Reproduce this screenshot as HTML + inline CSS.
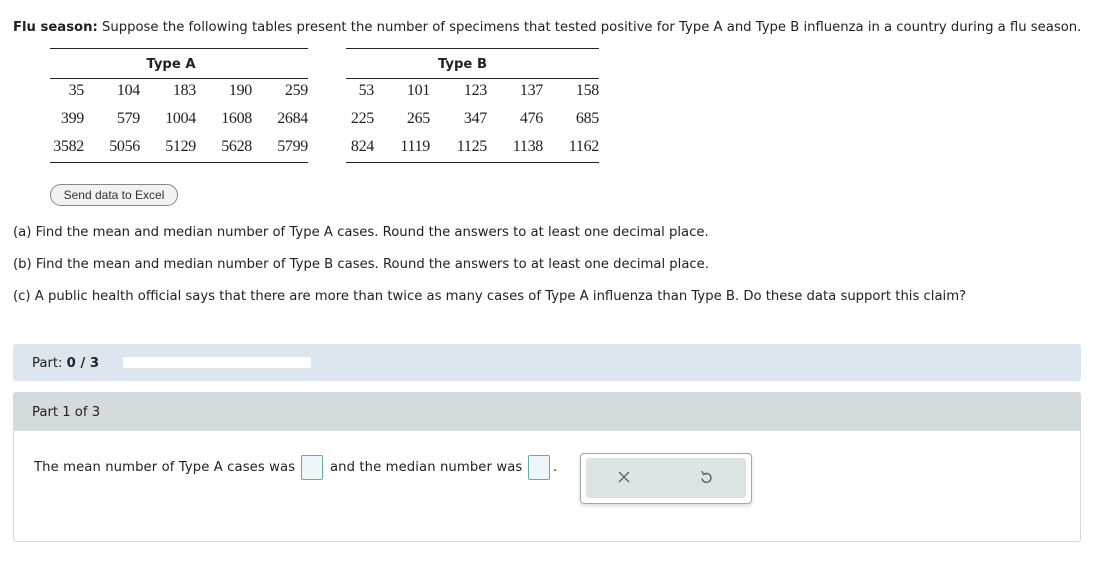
<!DOCTYPE html>
<html><head><style>
body{margin:0;width:1098px;height:583px;background:#fff;font-family:"DejaVu Sans",Verdana,sans-serif;font-size:13.2px;color:#222;position:relative;overflow:hidden}
.a{position:absolute;white-space:nowrap}
.n{position:absolute;font-family:"Liberation Serif",serif;font-size:16px;text-align:right;width:60px;letter-spacing:-0.3px}
.ln{position:absolute;height:1px;background:#222}
.h{position:absolute;font-weight:bold;font-size:13.2px;text-align:center}
</style></head><body>
<div class="a" style="left:13px;top:20px"><b>Flu season:</b> Suppose the following tables present the number of specimens that tested positive for Type A and Type B influenza in a country during a flu season.</div>
<div class="ln" style="left:50px;top:48px;width:258px"></div>
<div class="ln" style="left:50px;top:78px;width:258px"></div>
<div class="ln" style="left:50px;top:162px;width:258px"></div>
<div class="ln" style="left:346px;top:48px;width:253px"></div>
<div class="ln" style="left:346px;top:78px;width:253px"></div>
<div class="ln" style="left:346px;top:162px;width:253px"></div>
<div class="h" style="left:42px;top:57px;width:258px">Type A</div>
<div class="h" style="left:336px;top:57px;width:253px">Type B</div>
<div id="nums"></div>
<div class="a" style="left:50px;top:184px;width:126px;height:20px;border:1px solid #888;border-radius:11px;background:#f2f2f2;font-family:'Liberation Sans',Arial,sans-serif;font-size:12px;color:#333;text-align:center;line-height:20px">Send data to Excel</div>
<div class="a" style="left:13px;top:225px">(a) Find the mean and median number of Type A cases. Round the answers to at least one decimal place.</div>
<div class="a" style="left:13px;top:257px">(b) Find the mean and median number of Type B cases. Round the answers to at least one decimal place.</div>
<div class="a" style="left:13px;top:289px">(c) A public health official says that there are more than twice as many cases of Type A influenza than Type B. Do these data support this claim?</div>
<div class="a" style="left:13px;top:344px;width:1068px;height:37px;background:#dce6ef;border-radius:3px"></div>
<div class="a" style="left:32px;top:356px">Part: <b>0 / 3</b></div>
<div class="a" style="left:123px;top:357px;width:188px;height:11px;background:#fff;border-radius:2px"></div>
<div class="a" style="left:13px;top:392px;width:1066px;height:148px;border:1px solid #d3dbde;border-radius:3px"></div>
<div class="a" style="left:13px;top:392px;width:1068px;height:39px;background:#d3dbde;border-radius:3px 3px 0 0"></div>
<div class="a" style="left:32px;top:405px">Part 1 of 3</div>
<div class="a" style="left:34px;top:460px;letter-spacing:0.1px">The mean number of Type A cases was</div>
<div class="a" style="left:301px;top:455px;width:20px;height:23px;border:1px solid #6aa;background:#eef6f9;border-radius:2px"></div>
<div class="a" style="left:330px;top:460px;letter-spacing:0.1px">and the median number was</div>
<div class="a" style="left:528px;top:455px;width:20px;height:23px;border:1px solid #6aa;background:#eef6f9;border-radius:2px"></div>
<div class="a" style="left:553px;top:460px">.</div>
<div class="a" style="left:580px;top:453px;width:170px;height:49px;border:1px solid #9aa;border-radius:4px;background:#fff;box-shadow:0 2px 4px rgba(0,0,0,.15)"></div>
<div class="a" style="left:586px;top:458px;width:160px;height:40px;background:#dde4e6;border-radius:3px"></div>
<svg class="a" style="left:618px;top:471px" width="12" height="12"><path d="M1 1L11 11M11 1L1 11" stroke="#567" stroke-width="1.4"/></svg>
<svg class="a" style="left:699px;top:470px" width="14" height="15"><path d="M4.5 4.5A4.5 4.5 0 1 1 3 8.5" fill="none" stroke="#567" stroke-width="1.4"/><path d="M3 1L4.5 4.5L8 3.5" fill="none" stroke="#567" stroke-width="1.4"/></svg>
<script>
var A=[[35,104,183,190,259],[399,579,1004,1608,2684],[3582,5056,5129,5628,5799]];
var B=[[53,101,123,137,158],[225,265,347,476,685],[824,1119,1125,1138,1162]];
var ra=[84,140,196,252,308],rb=[374,430,487,543,599],ys=[82,110,138],h='';
for(var r=0;r<3;r++)for(var c=0;c<5;c++){h+='<div class="n" style="left:'+(ra[c]-60)+'px;top:'+ys[r]+'px">'+A[r][c]+'</div>';h+='<div class="n" style="left:'+(rb[c]-60)+'px;top:'+ys[r]+'px">'+B[r][c]+'</div>';}
document.getElementById('nums').innerHTML=h;
</script>
</body></html>
